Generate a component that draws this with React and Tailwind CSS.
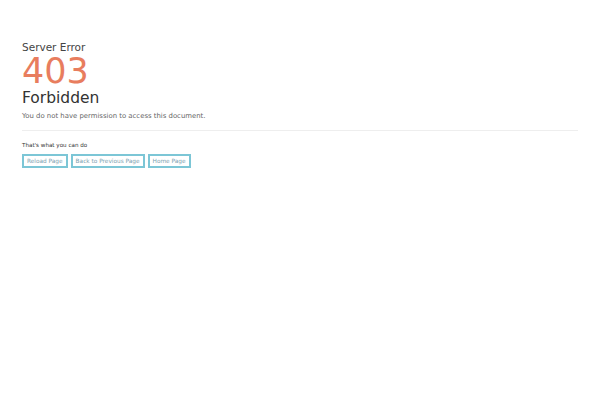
import React from 'react'

const font = { fontFamily: '"DejaVu Sans", Verdana, sans-serif' }

export default function App() {
  return (
    <div className="min-h-[400px] w-full bg-white text-[#333]" style={font}>
      <div className="px-[22px] pt-[41px]">
        <div className="text-[10.5px] leading-[12px] text-[#444]">Server Error</div>
        <div className="text-[35px] leading-[36px] text-[#e87d5e]">403</div>
        <div className="text-[15.5px] leading-[18px] text-[#333]">Forbidden</div>
        <p className="mt-[5px] text-[6.9px] leading-[9px] text-[#666]">
          You do not have permission to access this document.
        </p>
        <hr className="mt-[9px] border-t border-[#eee]" />
        <p className="mt-[10px] text-[5.6px] leading-[8px] text-[#333]">That's what you can do</p>
        <div className="mt-[5px] flex gap-[3px]">
          <button className="h-[14px] border-2 border-[#7cc6d6] px-[3px] text-[5.8px] leading-[10px] text-[#7d9fb0]">
            Reload Page
          </button>
          <button className="h-[14px] border-2 border-[#7cc6d6] px-[3px] text-[5.8px] leading-[10px] text-[#7d9fb0]">
            Back to Previous Page
          </button>
          <button className="h-[14px] border-2 border-[#7cc6d6] px-[3px] text-[5.8px] leading-[10px] text-[#7d9fb0]">
            Home Page
          </button>
        </div>
      </div>
    </div>
  )
}
